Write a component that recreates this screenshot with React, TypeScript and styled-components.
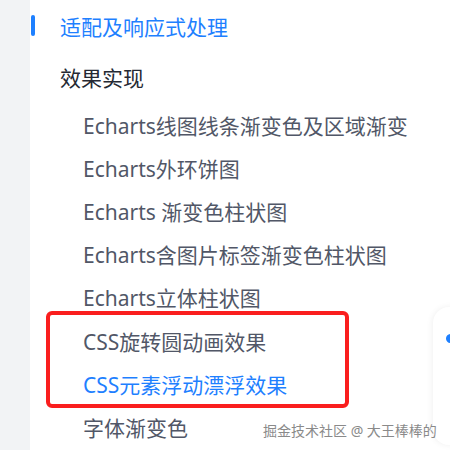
import React from 'react';
import styled, { createGlobalStyle } from 'styled-components';

const GlobalStyle = createGlobalStyle`
  html, body {
    margin: 0;
    padding: 0;
    background: #ffffff;
  }
  body {
    font-family: 'Noto Sans', 'Noto Sans CJK SC', sans-serif;
  }
`;

const Page = styled.div`
  position: relative;
  width: 450px;
  height: 450px;
  overflow: hidden;
  display: flex;
  flex-direction: row;
  background: #ffffff;
`;

const Rail = styled.div`
  width: 30px;
  flex-shrink: 0;
  background: #f2f3f5;
`;

const Outline = styled.div`
  flex: 1;
  display: flex;
  flex-direction: column;
  padding-top: 5px;
`;

const TitleRow = styled.div`
  display: flex;
  align-items: center;
  height: 43px;
`;

const Marker = styled.span`
  width: 4px;
  height: 21px;
  margin-left: 1px;
  border-radius: 2px;
  background: #1e80ff;
`;

const TitleText = styled.span`
  margin-left: 25px;
  font-size: 21px;
  color: #1e80ff;
  white-space: nowrap;
`;

const Heading = styled.div`
  height: 43px;
  line-height: 43px;
  margin-top: 10px;
  margin-bottom: 5px;
  padding-left: 30px;
  font-size: 21px;
  color: #252933;
  white-space: nowrap;
`;

const Item = styled.div<{ $active?: boolean }>`
  height: 43px;
  line-height: 43px;
  padding-left: 53px;
  font-size: 21px;
  color: ${(p) => (p.$active ? '#1e80ff' : '#515767')};
  white-space: nowrap;
`;

const Highlight = styled.div`
  width: 303px;
  height: 97px;
  box-sizing: border-box;
  margin: -8.5px 0 -1px 16px;
  padding: 6px 0 0 0;
  border: 4px solid #fa1e1e;
  border-radius: 6px;

  ${Item} {
    padding-left: 33px;
  }
`;

const SideCard = styled.div`
  position: absolute;
  left: 433px;
  top: 307px;
  width: 60px;
  height: 138px;
  background: #ffffff;
  border-radius: 16px;
  box-shadow: -1px 0 6px rgba(0, 0, 0, 0.06);
`;

const Dot = styled.span`
  position: absolute;
  left: 13px;
  top: 27px;
  width: 9px;
  height: 9px;
  border-radius: 50%;
  background: #1e80ff;
`;

const Watermark = styled.div`
  position: absolute;
  left: 263px;
  top: 420px;
  font-size: 14px;
  color: #8a8a8a;
  white-space: nowrap;
  text-shadow: 0 0 2px #ffffff, 0 0 1px #ffffff;
`;

const items = [
  'Echarts线图线条渐变色及区域渐变',
  'Echarts外环饼图',
  'Echarts 渐变色柱状图',
  'Echarts含图片标签渐变色柱状图',
  'Echarts立体柱状图',
];

const App = () => {
  return (
    <Page>
      <GlobalStyle />
      <Rail />
      <Outline>
        <TitleRow>
          <Marker />
          <TitleText>适配及响应式处理</TitleText>
        </TitleRow>
        <Heading>效果实现</Heading>
        {items.map((text) => (
          <Item key={text}>{text}</Item>
        ))}
        <Highlight>
          <Item>CSS旋转圆动画效果</Item>
          <Item $active>CSS元素浮动漂浮效果</Item>
        </Highlight>
        <Item>字体渐变色</Item>
      </Outline>
      <SideCard>
        <Dot />
      </SideCard>
      <Watermark>掘金技术社区 @ 大王棒棒的</Watermark>
    </Page>
  );
};

export default App;
